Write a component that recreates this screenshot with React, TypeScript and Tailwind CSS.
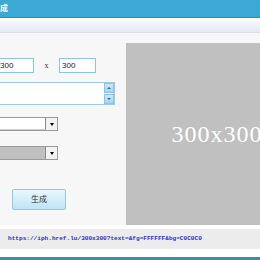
export default function App() {
  return (
    <div className="w-[260px] h-[260px] flex flex-col overflow-hidden bg-white font-['Liberation_Sans','Noto_Sans_CJK_SC',sans-serif]">
      {/* title bar */}
      <div className="h-[18px] shrink-0 bg-[#3ba9d4] border-b border-[#2e8db4] flex items-center">
        <span className="text-[8px] font-bold text-white whitespace-nowrap leading-none">成</span>
      </div>
      {/* toolbar band */}
      <div className="h-[15px] shrink-0 bg-gradient-to-b from-[#fbfcfe] to-[#e3e9f3] border-b border-[#d8dde6]" />

      {/* main */}
      <div className="h-[192px] shrink-0 flex bg-[#f7f7f7] pt-[10px]">
        <div className="w-[126px] shrink-0 flex flex-col pt-[15px]">
          {/* size row */}
          <div className="h-[15px] flex items-center">
            <div className="w-[37px] h-[15px] -ml-[3px] bg-white border border-[#8fc4e2] flex items-center pl-[2px] text-[8px] text-[#222]">300</div>
            <div className="w-[25px] text-center text-[8px] font-['Liberation_Serif',serif] text-[#333]">x</div>
            <div className="w-[37px] h-[15px] bg-white border border-[#8fc4e2] flex items-center pl-[2px] text-[8px] text-[#222]">300</div>
          </div>
          {/* text area */}
          <div className="mt-[9px] w-[118px] -ml-[3px] h-[23px] bg-white border border-[#9ccbe6] flex justify-end">
            <div className="w-[10px] h-full flex flex-col bg-[#d9ecf8]">
              <div className="h-[10px] bg-gradient-to-b from-[#cfe7f7] to-[#a9d3ef] border border-[#8cc2e4] flex items-center justify-center">
                <div className="w-0 h-0 border-l-[2px] border-r-[2px] border-b-[2px] border-l-transparent border-r-transparent border-b-[#2f6f9c]" />
              </div>
              <div className="flex-1 bg-[#eef6fc]" />
              <div className="h-[10px] bg-gradient-to-b from-[#cfe7f7] to-[#a9d3ef] border border-[#8cc2e4] flex items-center justify-center">
                <div className="w-0 h-0 border-l-[2px] border-r-[2px] border-t-[2px] border-l-transparent border-r-transparent border-t-[#2f6f9c]" />
              </div>
            </div>
          </div>
          {/* select 1 */}
          <div className="mt-[12px] w-[61px] -ml-[3px] h-[14px] flex border border-[#9a9a9a] bg-[#e8e8e8]">
            <div className="flex-1 bg-white border-r border-[#8a8a8a] border-b border-b-[#cfcfcf]" />
            <div className="w-[11px] bg-[#f2f2f2] flex items-center justify-center">
              <div className="w-0 h-0 border-l-[2px] border-r-[2px] border-t-[3px] border-l-transparent border-r-transparent border-t-black" />
            </div>
          </div>
          {/* select 2 */}
          <div className="mt-[15px] w-[61px] -ml-[3px] h-[14px] flex border border-[#9a9a9a] bg-[#e8e8e8]">
            <div className="flex-1 bg-[#c0c0c0] border-r border-[#8a8a8a]" />
            <div className="w-[11px] bg-[#f2f2f2] flex items-center justify-center">
              <div className="w-0 h-0 border-l-[2px] border-r-[2px] border-t-[3px] border-l-transparent border-r-transparent border-t-black" />
            </div>
          </div>
          {/* button */}
          <button className="mt-[29px] ml-[12px] w-[54px] h-[21px] rounded-[2px] border border-[#8ccbe8] bg-gradient-to-b from-[#eaf7fd] to-[#bfe4f5] text-[8px] text-[#333] flex items-center justify-center">
            生成
          </button>
        </div>
        {/* preview */}
        <div className="w-[134px] h-[182px] overflow-hidden bg-[#c0c0c0]">
          <div className="w-[182px] h-[182px] flex items-center justify-center">
            <span className="text-[24px] tracking-[1px] text-white font-['Liberation_Serif',serif] whitespace-nowrap">300x300</span>
          </div>
        </div>
      </div>

      {/* footer */}
      <div className="h-[4px] shrink-0 bg-white" />
      <div className="h-[20px] shrink-0 bg-[#ececec] flex items-center pl-[8px]">
        <span className="text-[6.1px] font-bold text-[#2d2dc8] font-['Liberation_Mono',monospace] whitespace-nowrap">
          https://iph.href.lu/300x300?text=&amp;fg=FFFFFF&amp;bg=C0C0C0
        </span>
      </div>
      <div className="h-[8px] shrink-0 bg-white" />
      <div className="flex-1 bg-[#3b8ea8]" />
    </div>
  );
}
